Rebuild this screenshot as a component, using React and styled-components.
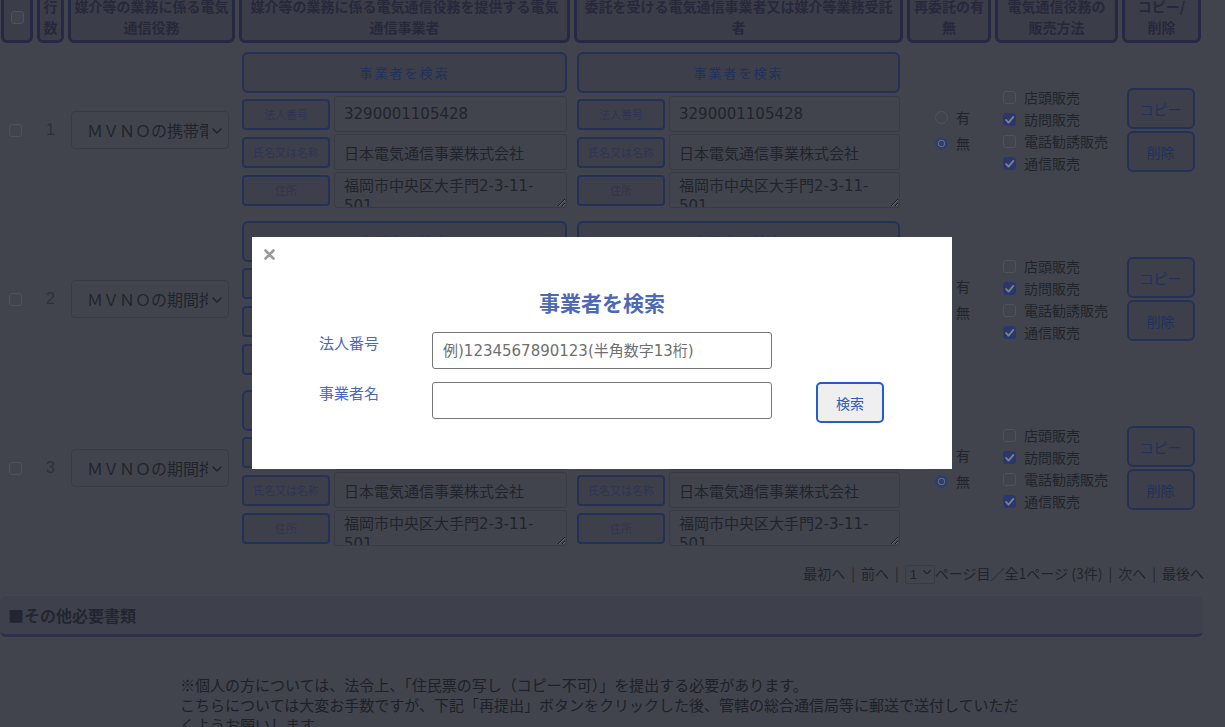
import React from "react";
import styled, { createGlobalStyle } from "styled-components";

const PAGE_BG = "#828899";
const HEAD_BG = "#777b93";
const HEAD_BORDER = "#4a5286";
const HEAD_TEXT = "#4e5276";
const BTN_BG = "#7a8096";
const BTN_BORDER = "#4a60ae";
const BTN_TEXT = "#4460b8";
const LABEL_TEXT = "#5a68a6";
const INPUT_BORDER = "#70768a";
const INPUT_TEXT = "#44485a";
const TEXT = "#44485a";

const COLS = "32px 27px 167px 331px 329px 84px 123px 79px";
const JP = `"Noto Sans CJK JP", sans-serif`;
const VALUE_FONT = `"DejaVu Sans", "Noto Sans CJK JP", sans-serif`;

const CHECK_SVG =
  "data:image/svg+xml;utf8," +
  encodeURIComponent(
    '<svg xmlns="http://www.w3.org/2000/svg" viewBox="0 0 12 12"><path d="M2.6 6.3l2.3 2.4 4.6-5.4" fill="none" stroke="#ffffff" stroke-width="1.8" stroke-linecap="round" stroke-linejoin="round"/></svg>'
  );

const GlobalStyle = createGlobalStyle`
  html, body { margin: 0; padding: 0; background: ${PAGE_BG}; overflow: hidden; }
  body { font-family: ${JP}; }
  * { box-sizing: border-box; }
`;

const Page = styled.div`
  width: 1225px;
  height: 727px;
  overflow: hidden;
  padding-left: 1px;
`;

const RowGrid = styled.div`
  display: grid;
  grid-template-columns: ${COLS};
  column-gap: 4px;
  align-items: ${(p) => (p.$head ? "stretch" : "center")};
`;

const HeadRow = styled(RowGrid)`
  margin-top: -9px;
`;

const HeadCell = styled.div`
  background: ${HEAD_BG};
  border: 3px solid ${HEAD_BORDER};
  border-radius: 6px;
  padding: 2px 2px;
  font-weight: 700;
  font-size: 14px;
  line-height: 21px;
  color: ${HEAD_TEXT};
  text-align: center;
  display: flex;
  align-items: center;
  justify-content: center;
  white-space: nowrap;
`;

const Body = styled.div`
  margin-top: 9px;
  display: flex;
  flex-direction: column;
  gap: 13px;
`;

const Check = styled.input.attrs({ type: "checkbox" })`
  appearance: none;
  flex: none;
  width: 13px;
  height: 13px;
  margin: 0;
  border: 1px solid #9ea2b6;
  border-radius: 3px;
  background: ${PAGE_BG};
  &:checked {
    border-color: #506edc;
    background: #506edc url("${CHECK_SVG}") center / 12px 12px no-repeat;
  }
`;

const Radio = styled.input.attrs({ type: "radio" })`
  appearance: none;
  flex: none;
  width: 13px;
  height: 13px;
  margin: 0;
  border: 1px solid #9ea2b6;
  border-radius: 50%;
  background: ${PAGE_BG};
  &:checked {
    border-color: #5a7ee0;
    background: radial-gradient(circle, #5a7ee0 0 2.4px, #c8d2f0 2.9px 3.4px, #5a7ee0 3.9px);
  }
`;

const CheckCell = styled.div`
  display: flex;
  justify-content: flex-start;
  padding-left: 8px;
`;

const RowNo = styled.div`
  text-align: center;
  font-size: 16px;
  color: #5c6072;
  font-family: "Liberation Sans", sans-serif;
`;

const SelectCell = styled.div`
  padding-left: 3px;
`;

const SelectWrap = styled.div`
  position: relative;
  width: ${(p) => p.$w}px;
  svg {
    position: absolute;
    pointer-events: none;
  }
`;

const RowSelect = styled.select`
  appearance: none;
  width: 158px;
  height: 38px;
  border: 1px solid ${INPUT_BORDER};
  border-radius: 4px;
  background: ${PAGE_BG};
  color: ${INPUT_TEXT};
  font-family: ${JP};
  font-size: 16px;
  padding: 0 20px 0 15px;
  outline: none;
`;

const ChevronAt = styled.svg`
  right: ${(p) => p.$r}px;
  top: ${(p) => p.$t}px;
`;

const Company = styled.div`
  padding: 0 3px;
  display: flex;
  flex-direction: column;
  gap: 2px;
`;

const SearchBtn = styled.button`
  height: 41px;
  width: 100%;
  margin-bottom: 1px;
  border: 2px solid ${BTN_BORDER};
  border-radius: 6px;
  background: ${BTN_BG};
  color: ${BTN_TEXT};
  font-family: ${JP};
  font-size: 13px;
  letter-spacing: 2px;
`;

const FieldRow = styled.div`
  display: grid;
  grid-template-columns: 88px 1fr;
  column-gap: 4px;
  align-items: center;
`;

const FieldLabel = styled.div`
  height: 31px;
  border: 2px solid ${BTN_BORDER};
  border-radius: 4px;
  background: ${BTN_BG};
  color: ${LABEL_TEXT};
  font-size: 11px;
  display: flex;
  align-items: center;
  justify-content: center;
  white-space: nowrap;
`;

const ValueInput = styled.input`
  height: 36px;
  width: 100%;
  border: 1px solid ${INPUT_BORDER};
  border-radius: 3px;
  background: ${PAGE_BG};
  color: ${INPUT_TEXT};
  font-family: ${VALUE_FONT};
  font-size: 15px;
  padding: 0 9px;
  outline: none;
`;

const ValueArea = styled.textarea`
  display: block;
  height: 36px;
  width: 100%;
  border: 1px solid ${INPUT_BORDER};
  border-radius: 3px;
  background: ${PAGE_BG};
  color: ${INPUT_TEXT};
  font-family: ${VALUE_FONT};
  font-size: 15px;
  line-height: 20px;
  padding: 3px 9px;
  overflow: hidden;
  resize: vertical;
  outline: none;
`;

const RadioCol = styled.div`
  display: flex;
  flex-direction: column;
  padding-left: 28px;
`;

const OptLabel = styled.label`
  display: flex;
  align-items: center;
  gap: ${(p) => p.$gap}px;
  height: ${(p) => p.$h}px;
  font-size: 14px;
  color: ${INPUT_TEXT};
  white-space: nowrap;
`;

const CheckCol = styled.div`
  display: flex;
  flex-direction: column;
  padding-left: 8px;
`;

const BtnCol = styled.div`
  display: flex;
  flex-direction: column;
  align-items: center;
  gap: 2px;
  padding-right: 2px;
`;

const SmallBtn = styled.button`
  width: 68px;
  height: 41px;
  border: 2px solid ${BTN_BORDER};
  border-radius: 6px;
  background: ${BTN_BG};
  color: ${BTN_TEXT};
  font-family: ${JP};
  font-size: 14px;
`;

const Pager = styled.div`
  margin-top: 17px;
  height: 20px;
  display: flex;
  justify-content: flex-end;
  align-items: center;
  padding-right: 21px;
  font-size: 14px;
  color: ${TEXT};
  white-space: pre;
`;

const Sep = styled.span`
  margin: 0 6px;
`;

const PagerSelect = styled.select`
  appearance: none;
  width: 30px;
  height: 19px;
  border: 1px solid ${INPUT_BORDER};
  border-radius: 2px;
  background: ${PAGE_BG};
  color: ${TEXT};
  font-family: "Liberation Sans", sans-serif;
  font-size: 13px;
  padding: 0 0 0 4px;
  outline: none;
`;

const SectionBar = styled.div`
  margin-top: 12px;
  width: 1203px;
  margin-left: -1px;
  height: 42px;
  border-bottom: 3px solid #5a6090;
  border-top: 1px solid #868ca2;
  border-radius: 6px;
  background: #7d8398;
  display: flex;
  align-items: center;
  padding-left: 8px;
  font-size: 16px;
  font-weight: 700;
  color: #464a60;
`;

const Notice = styled.div`
  margin-top: 38px;
  margin-left: 179px;
  width: 850px;
  font-size: 15px;
  line-height: 20px;
  color: #3e4252;
`;

const Overlay = styled.div`
  position: fixed;
  inset: 0;
  background: rgba(0, 0, 0, 0.5);
`;

const Modal = styled.div`
  position: absolute;
  left: 252px;
  top: 237px;
  width: 700px;
  height: 232px;
  background: #ffffff;
  padding: 50px 0 0 67px;
`;

const CloseBtn = styled.button`
  position: absolute;
  left: 10px;
  top: 10px;
  width: 14px;
  height: 14px;
  padding: 0;
  border: none;
  background: transparent;
  display: flex;
  align-items: center;
  justify-content: center;
`;

const ModalTitle = styled.h2`
  margin: 0 0 15px -67px;
  text-align: center;
  font-size: 21px;
  line-height: 30px;
  font-weight: 700;
  color: #4d69b4;
`;

const ModalForm = styled.div`
  display: grid;
  grid-template-columns: 113px 340px 68px;
  row-gap: 13px;
  align-items: start;
`;

const ModalLabel = styled.label`
  font-size: 15px;
  line-height: 22px;
  color: #4a68bc;
`;

const ModalInput = styled.input`
  height: 37px;
  width: 340px;
  border: 1px solid #767676;
  border-radius: 3px;
  padding: 0 10px;
  font-family: ${VALUE_FONT};
  font-size: 15px;
  color: #333;
  outline: none;
  &::placeholder {
    color: #6f6f6f;
  }
`;

const ModalSearch = styled.button`
  margin-left: 44px;
  width: 68px;
  height: 41px;
  border: 2px solid #1f5fcc;
  border-radius: 5px;
  background: #efefef;
  color: #2a5cb8;
  font-family: ${JP};
  font-size: 14px;
`;

const Chevron = ({ r, t, w = 10 }) => (
  <ChevronAt $r={r} $t={t} width={w} height={w * 0.6} viewBox="0 0 10 6">
    <path d="M1 1l4 4 4-4" fill="none" stroke={INPUT_TEXT} strokeWidth="1.6" strokeLinecap="round" strokeLinejoin="round" />
  </ChevronAt>
);

const heads = [
  ["行", "数"],
  ["媒介等の業務に係る電気", "通信役務"],
  ["媒介等の業務に係る電気通信役務を提供する電気", "通信事業者"],
  ["委託を受ける電気通信事業者又は媒介等業務受託", "者"],
  ["再委託の有", "無"],
  ["電気通信役務の", "販売方法"],
  ["コピー/", "削除"],
];

const rows = [
  { no: 1, service: "ＭＶＮＯの携帯電話サービス" },
  { no: 2, service: "ＭＶＮＯの期間拘束のないサービス" },
  { no: 3, service: "ＭＶＮＯの期間拘束のないサービス" },
];

const methods = [
  { name: "店頭販売", on: false },
  { name: "訪問販売", on: true },
  { name: "電話勧誘販売", on: false },
  { name: "通信販売", on: true },
];

const CompanyBlock = () => (
  <Company>
    <SearchBtn>事業者を検索</SearchBtn>
    <FieldRow>
      <FieldLabel>法人番号</FieldLabel>
      <ValueInput defaultValue="3290001105428" />
    </FieldRow>
    <FieldRow>
      <FieldLabel>氏名又は名称</FieldLabel>
      <ValueInput defaultValue="日本電気通信事業株式会社" />
    </FieldRow>
    <FieldRow>
      <FieldLabel>住所</FieldLabel>
      <ValueArea defaultValue="福岡市中央区大手門2-3-11-501" />
    </FieldRow>
  </Company>
);

const DataRow = ({ row }) => (
  <RowGrid>
    <CheckCell>
      <Check />
    </CheckCell>
    <RowNo>{row.no}</RowNo>
    <SelectCell>
      <SelectWrap $w={158}>
        <RowSelect defaultValue={row.service}>
          <option>{row.service}</option>
        </RowSelect>
        <Chevron r={7} t={17} />
      </SelectWrap>
    </SelectCell>
    <CompanyBlock />
    <CompanyBlock />
    <RadioCol>
      <OptLabel $gap={8} $h={26}>
        <Radio name={`re${row.no}`} />有
      </OptLabel>
      <OptLabel $gap={8} $h={26}>
        <Radio name={`re${row.no}`} defaultChecked />無
      </OptLabel>
    </RadioCol>
    <CheckCol>
      {methods.map((m) => (
        <OptLabel key={m.name} $gap={8} $h={22}>
          <Check defaultChecked={m.on} />
          {m.name}
        </OptLabel>
      ))}
    </CheckCol>
    <BtnCol>
      <SmallBtn>コピー</SmallBtn>
      <SmallBtn>削除</SmallBtn>
    </BtnCol>
  </RowGrid>
);

export default function App() {
  return (
    <>
      <GlobalStyle />
      <Page>
        <HeadRow $head>
          <HeadCell>
            <Check />
          </HeadCell>
          {heads.map((h) => (
            <HeadCell key={h[0]}>
              {h[0]}
              <br />
              {h[1]}
            </HeadCell>
          ))}
        </HeadRow>
        <Body>
          {rows.map((r) => (
            <DataRow key={r.no} row={r} />
          ))}
        </Body>
        <Pager>
          最初へ<Sep>|</Sep>前へ<Sep>|</Sep>
          <SelectWrap $w={30}>
            <PagerSelect defaultValue="1">
              <option>1</option>
            </PagerSelect>
            <Chevron r={4} t={7} w={8} />
          </SelectWrap>
          ページ目／全1ページ (3件)<Sep>|</Sep>次へ<Sep>|</Sep>最後へ
        </Pager>
        <SectionBar>■その他必要書類</SectionBar>
        <Notice>
          ※個人の方については、法令上、「住民票の写し（コピー不可）」を提出する必要があります。
          <br />
          こちらについては大変お手数ですが、下記「再提出」ボタンをクリックした後、管轄の総合通信局等に郵送で送付していただくようお願いします。
        </Notice>
      </Page>
      <Overlay>
        <Modal>
          <CloseBtn aria-label="閉じる">
            <svg width="11" height="11" viewBox="0 0 11 11">
              <path d="M1.5 1.5l8 8M9.5 1.5l-8 8" stroke="#9a9a9a" strokeWidth="2.6" strokeLinecap="round" />
            </svg>
          </CloseBtn>
          <ModalTitle>事業者を検索</ModalTitle>
          <ModalForm>
            <ModalLabel>法人番号</ModalLabel>
            <ModalInput placeholder="例)1234567890123(半角数字13桁)" />
            <span />
            <ModalLabel>事業者名</ModalLabel>
            <ModalInput />
            <ModalSearch>検索</ModalSearch>
          </ModalForm>
        </Modal>
      </Overlay>
    </>
  );
}
